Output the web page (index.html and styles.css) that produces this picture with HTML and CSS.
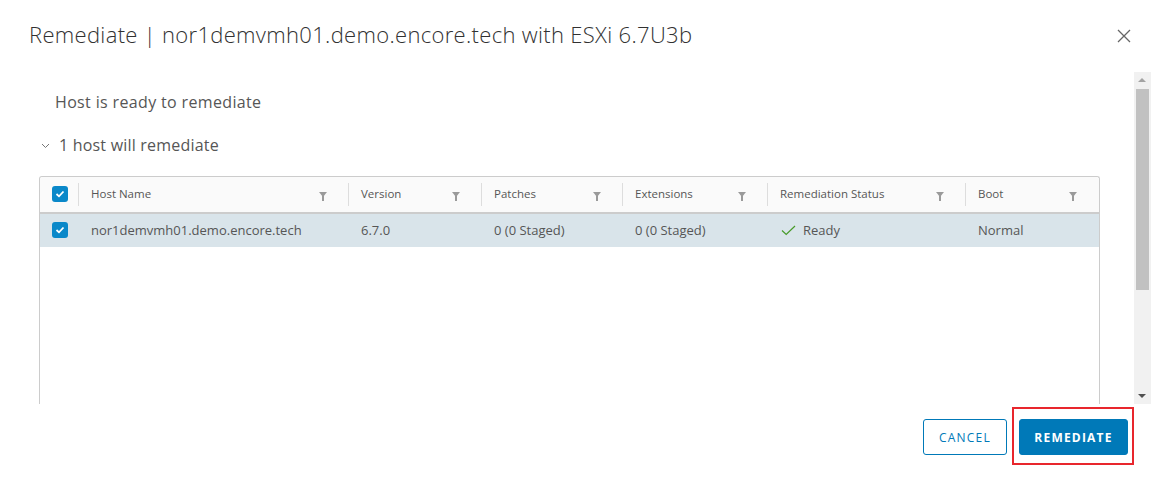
FILE: index.html
```html
<!DOCTYPE html>
<html>
<head>
<meta charset="utf-8">
<link rel="stylesheet" href="styles.css">
</head>
<body>
<div class="modal">
  <div class="modal-header">
    <h3 class="modal-title">Remediate | nor1demvmh01.demo.encore.tech with ESXi 6.7U3b</h3>
    <button class="close" aria-label="Close">
      <svg width="14" height="14" viewBox="0 0 14 14"><path d="M1 1 L13 13 M13 1 L1 13" stroke="#666" stroke-width="1.3" fill="none"/></svg>
    </button>
  </div>
  <div class="modal-body">
    <div class="scroll-content">
      <p class="status-text">Host is ready to remediate</p>
      <div class="section-toggle">
        <svg class="chevron" width="9" height="6" viewBox="0 0 9 6"><path d="M1 1 L4.5 4.5 L8 1" stroke="#777" stroke-width="1" fill="none"/></svg>
        <span>1 host will remediate</span>
      </div>
      <div class="datagrid">
        <div class="dg-row dg-head">
          <div class="dg-cell c-check"><span class="checkbox"><svg width="10" height="8" viewBox="0 0 10 8"><path d="M1.5 4 L4 6.3 L8.5 1.5" stroke="#fff" stroke-width="1.8" fill="none"/></svg></span></div>
          <div class="dg-cell c-host"><span class="label">Host Name</span><i class="filter"></i></div>
          <div class="dg-cell c-ver"><span class="label">Version</span><i class="filter"></i></div>
          <div class="dg-cell c-pat"><span class="label">Patches</span><i class="filter"></i></div>
          <div class="dg-cell c-ext"><span class="label">Extensions</span><i class="filter"></i></div>
          <div class="dg-cell c-stat"><span class="label">Remediation Status</span><i class="filter"></i></div>
          <div class="dg-cell c-boot last"><span class="label">Boot</span><i class="filter"></i></div>
        </div>
        <div class="dg-row dg-body selected">
          <div class="dg-cell c-check"><span class="checkbox"><svg width="10" height="8" viewBox="0 0 10 8"><path d="M1.5 4 L4 6.3 L8.5 1.5" stroke="#fff" stroke-width="1.8" fill="none"/></svg></span></div>
          <div class="dg-cell c-host">nor1demvmh01.demo.encore.tech</div>
          <div class="dg-cell c-ver">6.7.0</div>
          <div class="dg-cell c-pat">0 (0 Staged)</div>
          <div class="dg-cell c-ext">0 (0 Staged)</div>
          <div class="dg-cell c-stat"><svg class="ok" width="15" height="11" viewBox="0 0 15 11"><path d="M1 5.5 L5.2 9.5 L14 1" stroke="#489b2a" stroke-width="1.2" fill="none"/></svg>Ready</div>
          <div class="dg-cell c-boot">Normal</div>
        </div>
        <div class="dg-fill"></div>
      </div>
    </div>
    <div class="scrollbar">
      <div class="sb-arrow up"></div>
      <div class="sb-thumb"></div>
      <div class="sb-track"></div>
      <div class="sb-arrow down"></div>
    </div>
  </div>
  <div class="modal-footer">
    <button class="btn btn-outline">CANCEL</button>
    <div class="highlight"><button class="btn btn-primary">REMEDIATE</button></div>
  </div>
</div>
</body>
</html>
```

FILE: styles.css
```css
* { box-sizing: border-box; }
html, body { margin: 0; padding: 0; background: #fff; }
body {
  font-family: "Open Sans", Lato, sans-serif;
  color: #565656;
  width: 1157px;
  height: 480px;
  overflow: hidden;
}
.modal { width: 1157px; height: 480px; display: flex; flex-direction: column; }
.modal-header {
  height: 72px;
  display: flex;
  justify-content: space-between;
  align-items: flex-start;
  padding: 20px 26px 0 29px;
}
.modal-title {
  margin: 0;
  font-weight: 300;
  font-size: 22px;
  line-height: 28px;
  color: #313131;
  letter-spacing: 0.32px;
}
.close {
  border: 0;
  background: none;
  padding: 0;
  margin-top: 9px;
  width: 14px;
  height: 14px;
  display: flex;
}
.modal-body {
  height: 332px;
  display: flex;
  padding-left: 39px;
  padding-right: 6px;
}
.scroll-content {
  flex: 1;
  overflow: hidden;
  padding-right: 34px;
}
.status-text {
  margin: 19px 0 0 16px;
  font-size: 16px;
  line-height: 22px;
  letter-spacing: 0.35px;
}
.section-toggle {
  margin-top: 21px;
  display: flex;
  align-items: center;
  font-size: 16px;
  line-height: 22px;
  height: 22px;
  letter-spacing: 0.2px;
}
.chevron { margin: 1px 9px 0 2px; }
.datagrid {
  margin-top: 20px;
  border: 1px solid #ccc;
  border-bottom: 0;
  border-radius: 3px 3px 0 0;
  height: 300px;
}
.dg-row { display: flex; }
.dg-head {
  height: 37px;
  background: #fafafa;
  border-bottom: 2px solid #ccc;
  font-size: 11.5px;
  color: #565656;
  border-radius: 3px 3px 0 0;
}
.dg-body {
  height: 33px;
  font-size: 13px;
  color: #565656;
  padding-bottom: 2px;
}
.selected { background: #d9e4ea; }
.dg-cell {
  display: flex;
  align-items: center;
  padding-left: 12px;
  padding-right: 22px;
  position: relative;
}
.dg-head .dg-cell { padding-bottom: 2px; }
.dg-head .label { flex: 1; }
.dg-head .dg-cell::after {
  content: "";
  position: absolute;
  right: 0;
  top: 6px;
  bottom: 6px;
  width: 1px;
  background: #ddd;
}
.dg-head .dg-cell.last::after { display: none; }
.c-check { width: 39px; padding-left: 12px; padding-right: 0; }
.c-host { width: 270px; }
.c-ver { width: 133px; }
.c-pat { width: 141px; }
.c-ext { width: 145px; }
.c-stat { width: 198px; }
.c-boot { flex: 1; padding-right: 22px; }
.checkbox {
  flex: none;
  width: 16px;
  height: 16px;
  border-radius: 3px;
  background: #0a88c9;
  display: flex;
  align-items: center;
  justify-content: center;
}
.filter {
  flex: none;
  width: 0;
  height: 0;
  border-left: 4px solid transparent;
  border-right: 4px solid transparent;
  border-top: 5px solid #9a9a9a;
  position: relative;
  top: 1px;
}
.filter::after {
  content: "";
  position: absolute;
  left: -1px;
  top: -1px;
  width: 2px;
  height: 5px;
  background: #9a9a9a;
}
.ok { margin: 2px 7px 0 1px; }
.scrollbar {
  width: 17px;
  display: flex;
  flex-direction: column;
  background: #f1f1f1;
}
.sb-arrow { height: 17px; position: relative; }
.sb-arrow::after {
  content: "";
  position: absolute;
  left: 4px;
  border-left: 4px solid transparent;
  border-right: 4px solid transparent;
}
.sb-arrow.up::after { top: 6px; border-bottom: 4px solid #a3a3a3; }
.sb-arrow.down::after { top: 7px; border-top: 4px solid #505050; }
.sb-thumb { height: 201px; margin: 0 2px; background: #c1c1c1; }
.sb-track { flex: 1; }
.modal-footer {
  flex: 1;
  display: flex;
  justify-content: flex-end;
  align-items: flex-start;
  padding: 15px 23px 0 0;
}
.btn {
  height: 36px;
  font-family: "Open Sans", Lato, sans-serif;
  font-size: 12px;
  letter-spacing: 1.2px;
  border-radius: 3px;
  padding: 0;
  cursor: pointer;
}
.btn-outline {
  background: #fff;
  border: 1px solid #0079b8;
  color: #0079b8;
  width: 84px;
}
.highlight {
  margin-left: 5px;
  margin-top: -12px;
  border: 2px solid #e8262d;
  padding: 10px 4px 8px 5px;
}
.btn-primary {
  background: #0079b8;
  border: 1px solid #0079b8;
  color: #fff;
  font-weight: 700;
  width: 109px;
  display: block;
}
```
